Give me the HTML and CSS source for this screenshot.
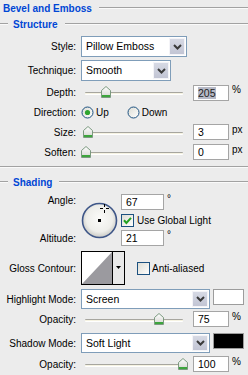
FILE: index.html
```html
<!DOCTYPE html>
<html lang="en">
<head>
    <meta charset="UTF-8">
    <meta name="viewport" content="width=device-width, initial-scale=1.0">
    <title>Bevel and Emboss</title>
    <link rel="stylesheet" href="styles.css">
</head>
<body>
    <div class="panel">
        <div class="legend top"><span>Bevel and Emboss</span></div>
        <div class="legend sub"><span>Structure</span></div>

        <div class="row sel-row first">
            <div class="label">Style:</div>
            <div class="select w-style">
                <span class="select-text">Pillow Emboss</span>
                <span class="select-btn"><svg width="9" height="6" viewBox="0 0 9 6"><path d="M1 1l3.5 3.5L8 1" stroke="#3a3a3a" stroke-width="2" fill="none"/></svg></span>
            </div>
        </div>
        <div class="row sel-row">
            <div class="label">Technique:</div>
            <div class="select w-tech">
                <span class="select-text">Smooth</span>
                <span class="select-btn"><svg width="9" height="6" viewBox="0 0 9 6"><path d="M1 1l3.5 3.5L8 1" stroke="#3a3a3a" stroke-width="2" fill="none"/></svg></span>
            </div>
        </div>
        <div class="row num-row depth">
            <div class="label">Depth:</div>
            <div class="slider">
                <div class="track"></div>
                <svg class="thumb" style="left: 20px" width="10" height="12" viewBox="0 0 10 12"><defs><linearGradient id="tg1" x1="0" y1="0" x2="0" y2="1"><stop offset="0" stop-color="#fff"/><stop offset="1" stop-color="#d4d4d0"/></linearGradient></defs><path d="M0.5 4.5L5 0.5L9.5 4.5V11.5H0.5Z" fill="url(#tg1)" stroke="#7c9a80"/><rect x="1" y="9" width="8" height="2" fill="#3da53d"/></svg>
            </div>
            <div class="field"><span class="hl">205</span></div>
            <span class="unit">%</span>
        </div>
        <div class="row dir-row">
            <div class="label">Direction:</div>
            <span class="radio">
                <svg width="13" height="13" viewBox="0 0 13 13"><defs><linearGradient id="rg" x1="0" y1="0" x2="1" y2="1"><stop offset="0" stop-color="#dcdcd4"/><stop offset="1" stop-color="#fff"/></linearGradient></defs><circle cx="6.5" cy="6.5" r="5.5" fill="url(#rg)" stroke="#1c5180"/><circle cx="6.5" cy="6.5" r="2.6" fill="#2fa52f"/></svg>
                Up
            </span>
            <span class="radio down">
                <svg width="13" height="13" viewBox="0 0 13 13"><circle cx="6.5" cy="6.5" r="5.5" fill="url(#rg)" stroke="#1c5180"/></svg>
                Down
            </span>
        </div>
        <div class="row num-row size">
            <div class="label">Size:</div>
            <div class="slider">
                <div class="track"></div>
                <svg class="thumb" style="left: 2px" width="10" height="12" viewBox="0 0 10 12"><path d="M0.5 4.5L5 0.5L9.5 4.5V11.5H0.5Z" fill="url(#tg1)" stroke="#7c9a80"/><rect x="1" y="9" width="8" height="2" fill="#3da53d"/></svg>
            </div>
            <div class="field">3</div>
            <span class="unit">px</span>
        </div>
        <div class="row num-row soften">
            <div class="label">Soften:</div>
            <div class="slider">
                <div class="track"></div>
                <svg class="thumb" style="left: 0px" width="10" height="12" viewBox="0 0 10 12"><path d="M0.5 4.5L5 0.5L9.5 4.5V11.5H0.5Z" fill="url(#tg1)" stroke="#7c9a80"/><rect x="1" y="9" width="8" height="2" fill="#3da53d"/></svg>
            </div>
            <div class="field">0</div>
            <span class="unit">px</span>
        </div>

        <div class="rule"></div>
        <div class="legend sub shading"><span>Shading</span></div>

        <div class="angle-block">
            <div class="angle-labels">
                <div class="label">Angle:</div>
                <div class="label">Altitude:</div>
            </div>
            <svg class="dial" width="37" height="37" viewBox="0 0 37 37">
                <defs><radialGradient id="dg" cx="0.5" cy="0.45" r="0.55"><stop offset="0" stop-color="#fbfbf9"/><stop offset="0.7" stop-color="#eeeeea"/><stop offset="1" stop-color="#c9c9c4"/></radialGradient></defs>
                <circle cx="18.5" cy="18.5" r="17" fill="url(#dg)" stroke="#3e5688" stroke-width="1.6"/>
                <rect x="17" y="17" width="3" height="3" fill="#000"/>
                <path d="M23.5 2v3M23.5 8v3M19 6.5h3M25 6.5h3" stroke="#000" stroke-width="1"/>
            </svg>
            <div class="angle-fields">
                <div class="afield-row">
                    <div class="field wide">67</div>
                    <span class="deg">°</span>
                </div>
                <div class="check-row">
                    <svg width="13" height="13" viewBox="0 0 13 13"><defs><linearGradient id="cg" x1="0" y1="0" x2="1" y2="1"><stop offset="0" stop-color="#dcdcd4"/><stop offset="1" stop-color="#fff"/></linearGradient></defs><rect x="0.5" y="0.5" width="12" height="12" fill="url(#cg)" stroke="#1c5180"/><path d="M3 6.3l2.4 2.6l4.6-5" stroke="#21a121" stroke-width="2" fill="none"/></svg>
                    <span>Use Global Light</span>
                </div>
                <div class="afield-row">
                    <div class="field wide">21</div>
                    <span class="deg">°</span>
                </div>
            </div>
        </div>

        <div class="row contour-row">
            <div class="label">Gloss Contour:</div>
            <svg class="contour" width="44" height="34" viewBox="0 0 44 34">
                <rect x="0.5" y="0.5" width="43" height="33" fill="#fff" stroke="#000"/>
                <rect x="32" y="1" width="11" height="32" fill="#e9e9e9"/>
                <path d="M31.5 1v32" stroke="#000"/>
                <polygon points="1,33 31,1 31,33" fill="#9b9a9f"/>
                <polygon points="35,15 40,15 37.5,18" fill="#000"/>
            </svg>
            <span class="check-row anti">
                <svg width="13" height="13" viewBox="0 0 13 13"><rect x="0.5" y="0.5" width="12" height="12" fill="url(#cg)" stroke="#1c5180"/></svg>
                <span>Anti-aliased</span>
            </span>
        </div>

        <div class="row mode-row hmode">
            <div class="label">Highlight Mode:</div>
            <div class="select w-mode">
                <span class="select-text">Screen</span>
                <span class="select-btn"><svg width="9" height="6" viewBox="0 0 9 6"><path d="M1 1l3.5 3.5L8 1" stroke="#3a3a3a" stroke-width="2" fill="none"/></svg></span>
            </div>
            <div class="swatch white"></div>
        </div>
        <div class="row num-row op1">
            <div class="label">Opacity:</div>
            <div class="slider">
                <div class="track"></div>
                <svg class="thumb" style="left: 73px" width="10" height="12" viewBox="0 0 10 12"><path d="M0.5 4.5L5 0.5L9.5 4.5V11.5H0.5Z" fill="url(#tg1)" stroke="#7c9a80"/><rect x="1" y="9" width="8" height="2" fill="#3da53d"/></svg>
            </div>
            <div class="field">75</div>
            <span class="unit">%</span>
        </div>
        <div class="row mode-row smode">
            <div class="label">Shadow Mode:</div>
            <div class="select w-mode">
                <span class="select-text">Soft Light</span>
                <span class="select-btn"><svg width="9" height="6" viewBox="0 0 9 6"><path d="M1 1l3.5 3.5L8 1" stroke="#3a3a3a" stroke-width="2" fill="none"/></svg></span>
            </div>
            <div class="swatch black"></div>
        </div>
        <div class="row num-row op2">
            <div class="label">Opacity:</div>
            <div class="slider">
                <div class="track"></div>
                <svg class="thumb" style="left: 97px" width="10" height="12" viewBox="0 0 10 12"><path d="M0.5 4.5L5 0.5L9.5 4.5V11.5H0.5Z" fill="url(#tg1)" stroke="#7c9a80"/><rect x="1" y="9" width="8" height="2" fill="#3da53d"/></svg>
            </div>
            <div class="field">100</div>
            <span class="unit">%</span>
        </div>
    </div>
</body>
</html>
```

FILE: styles.css
```css
body {
    margin: 0;
    background: #ececec;
    font-family: "Liberation Sans", Arial, sans-serif;
    font-size: 10px;
    color: #000;
}
.panel {
    width: 248px;
    height: 375px;
    overflow: hidden;
}
.legend {
    display: flex;
    align-items: center;
    height: 16px;
    font-weight: bold;
    color: #0046d5;
}
.legend::after {
    content: "";
    flex: 1;
    height: 0;
    border-top: 1px solid #a2a2a2;
    border-bottom: 1px solid #fafafa;
    margin-left: 7px;
}
.legend.top {
    padding-left: 3px;
}
.legend.sub::before {
    content: "";
    width: 8px;
    height: 0;
    border-top: 1px solid #a2a2a2;
    border-bottom: 1px solid #fafafa;
    margin-right: 5px;
}
.legend.sub::after {
    margin-left: 8px;
}
.legend.shading {
    margin-top: 6px;
}
.legend.shading::after {
    margin-left: 7px;
}
.rule {
    margin-top: 6px;
    border-top: 1px solid #a2a2a2;
    border-bottom: 1px solid #fafafa;
}
.row {
    display: flex;
    align-items: center;
}
.label {
    width: 76px;
    margin-right: 5px;
    text-align: right;
    flex-shrink: 0;
    white-space: nowrap;
}

/* dropdowns */
.sel-row {
    height: 21px;
    margin-top: 3px;
}
.sel-row.first {
    margin-top: 4px;
}
.select {
    box-sizing: border-box;
    height: 21px;
    border: 1px solid #7f9db9;
    background: #fff;
    display: flex;
    align-items: stretch;
    padding: 1px;
}
.w-style { width: 106px; }
.w-tech { width: 90px; }
.w-mode { width: 129px; }
.select-text {
    flex: 1;
    padding-left: 3px;
    font-size: 10.5px;
    line-height: 17px;
    white-space: nowrap;
    overflow: hidden;
}
.select-btn {
    width: 16px;
    display: flex;
    align-items: center;
    justify-content: center;
    background: linear-gradient(#d6d9e4, #c2c5d4);
    border: 1px solid #f4f4f8;
    box-sizing: border-box;
}

/* sliders and number fields */
.num-row {
    height: 16px;
}
.num-row.depth { margin-top: 3px; height: 17px; }
.num-row.size { margin-top: 4px; }
.num-row.soften { margin-top: 4px; }
.num-row.op1 { margin-top: 2px; }
.num-row.op2 { margin-top: 3px; }
.slider {
    position: relative;
    width: 106px;
    height: 13px;
    margin-right: 6px;
    flex-shrink: 0;
}
.track {
    margin: 6px 0 0 4px;
    width: 98px;
    height: 1px;
    border-top: 1px solid #a7a69f;
    border-bottom: 1px solid #fff;
    background: #f6f3e2;
    border-radius: 1px;
}
.thumb {
    position: absolute;
    top: 0;
}
.field {
    box-sizing: border-box;
    width: 36px;
    height: 16px;
    border: 1px solid #a5a5a5;
    background: #fff;
    padding-left: 4px;
    line-height: 14px;
    font-size: 10.5px;
}
.field.wide {
    width: 43px;
}
.hl {
    background: #b6b9c6;
    color: #222;
}
.unit {
    align-self: flex-start;
    margin-left: 3px;
    line-height: 11px;
}

/* direction */
.dir-row {
    margin-top: 3px;
    height: 16px;
}
.radio {
    display: flex;
    align-items: center;
    gap: 2px;
}
.radio.down {
    margin-left: 18px;
}

/* angle */
.angle-block {
    display: flex;
    margin-top: 3px;
    height: 54px;
}
.angle-labels {
    display: flex;
    flex-direction: column;
    justify-content: space-between;
    line-height: 16px;
}
.dial {
    margin-top: 9px;
    flex-shrink: 0;
}
.angle-fields {
    margin-left: 3px;
    display: flex;
    flex-direction: column;
}
.afield-row {
    display: flex;
    margin-top: 1px;
}
.afield-row:last-child {
    margin-top: 3px;
}
.deg {
    margin-left: 3px;
    line-height: 9px;
}
.check-row {
    display: flex;
    align-items: center;
    gap: 3px;
    margin-top: 4px;
    height: 13px;
}

/* contour */
.contour-row {
    margin-top: 4px;
    height: 34px;
}
.contour {
    flex-shrink: 0;
}
.check-row.anti {
    margin: 0 0 0 12px;
    gap: 2px;
}

/* modes */
.mode-row {
    height: 20px;
    margin-top: 4px;
}
.mode-row.smode {
    margin-top: 6px;
}
.mode-row .select {
    height: 20px;
}
.mode-row .select-text {
    line-height: 16px;
}
.swatch {
    box-sizing: border-box;
    align-self: flex-start;
    width: 31px;
    height: 16px;
    margin-left: 3px;
    border: 1px solid #9c9c9c;
}
.swatch.white { background: #fff; }
.swatch.black { background: #000; }
```
